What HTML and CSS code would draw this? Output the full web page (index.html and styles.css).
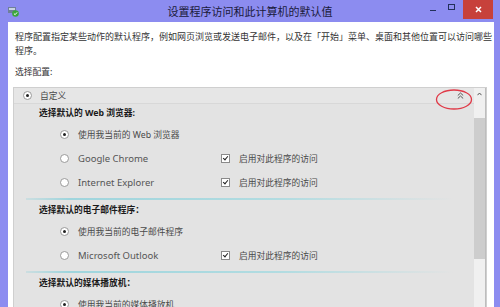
FILE: index.html
```html
<!DOCTYPE html>
<html lang="zh-CN">
<head>
<meta charset="utf-8">
<link rel="stylesheet" href="styles.css">
</head>
<body>
<div class="window">
  <div class="titlebar">
    <div class="app-icon">
      <svg width="11" height="10" viewBox="0 0 11 10">
        <rect x="0" y="0" width="8" height="6" fill="#6f7f9a"/>
        <rect x="1" y="1" width="6" height="2" fill="#c9d3e3"/>
        <circle cx="7.5" cy="6.5" r="3.3" fill="#3aa63a"/>
        <path d="M5.9 6.5 L7.1 7.7 L9.1 5.4" stroke="#fff" stroke-width="1" fill="none"/>
      </svg>
    </div>
    <div class="title">设置程序访问和此计算机的默认值</div>
    <div class="controls">
      <span class="btn-min"></span>
      <span class="btn-max"></span>
      <span class="btn-close">
        <svg width="7" height="7" viewBox="0 0 7 7"><path d="M1 1 L6 6 M6 1 L1 6" stroke="#fff" stroke-width="1.5"/></svg>
      </span>
    </div>
  </div>
  <div class="client">
    <p class="desc">程序配置指定某些动作的默认程序，例如网页浏览或发送电子邮件，以及在「开始」菜单、桌面和其他位置可以访问哪些<br>程序。</p>
    <div class="label">选择配置:</div>
    <div class="panel">
      <div class="list">
        <div class="header">
          <span class="radio on"></span>
          <span class="header-text">自定义</span>
          <svg class="chev" width="7" height="7" viewBox="0 0 7 7"><path d="M0.8 3.5 L3.5 1 L6.2 3.5 M0.8 6.5 L3.5 4 L6.2 6.5" stroke="#555" stroke-width="1" fill="none"/></svg>
        </div>
        <div class="section">
          <div class="heading">选择默认的 Web 浏览器:</div>
          <div class="option"><span class="radio on"></span><span class="opt-label">使用我当前的 Web 浏览器</span></div>
          <div class="option"><span class="radio"></span><span class="opt-label latin">Google Chrome</span><span class="check"></span><span class="chk-label">启用对此程序的访问</span></div>
          <div class="option"><span class="radio"></span><span class="opt-label latin">Internet Explorer</span><span class="check"></span><span class="chk-label">启用对此程序的访问</span></div>
        </div>
        <div class="sep"></div>
        <div class="section">
          <div class="heading">选择默认的电子邮件程序：</div>
          <div class="option"><span class="radio on"></span><span class="opt-label">使用我当前的电子邮件程序</span></div>
          <div class="option"><span class="radio"></span><span class="opt-label latin">Microsoft Outlook</span><span class="check"></span><span class="chk-label">启用对此程序的访问</span></div>
        </div>
        <div class="sep"></div>
        <div class="section">
          <div class="heading">选择默认的媒体播放机：</div>
          <div class="option"><span class="radio on"></span><span class="opt-label">使用我当前的媒体播放机</span></div>
        </div>
      </div>
      <div class="scrollbar">
        <div class="sb-arrow">
          <svg width="5" height="4" viewBox="0 0 5 4"><path d="M0.5 3.2 L2.5 1 L4.5 3.2" stroke="#555" stroke-width="1" fill="none"/></svg>
        </div>
        <div class="sb-gap"></div>
        <div class="sb-thumb"></div>
        <div class="sb-rest"></div>
      </div>
      <svg class="mark" width="40" height="24" viewBox="0 0 40 24"><ellipse cx="19" cy="11.5" rx="17.5" ry="9.5" fill="none" stroke="#e03a48" stroke-width="1.3"/></svg>
    </div>
  </div>
</div>
</body>
</html>
```

FILE: styles.css
```css
* { box-sizing: border-box; }
html, body { margin: 0; padding: 0; }
body {
  width: 500px;
  height: 307px;
  overflow: hidden;
  background: #8c8cf0;
  font-family: "Noto Sans", "Noto Sans CJK SC", sans-serif;
}
.window {
  display: flex;
  flex-direction: column;
  height: 307px;
}
.titlebar {
  height: 22px;
  display: flex;
  align-items: flex-start;
  position: relative;
}
.app-icon {
  margin: 7px 0 0 8px;
  width: 11px;
  height: 10px;
  display: flex;
}
.title {
  position: absolute;
  left: 0;
  right: 0;
  top: 4px;
  text-align: center;
  font-family: "Noto Sans CJK SC", sans-serif;
  font-size: 11px;
  line-height: 14px;
  color: #1a1a3a;
}
.controls {
  margin-left: auto;
  margin-right: 7px;
  display: flex;
  align-items: flex-start;
}
.btn-min {
  width: 6px;
  height: 1px;
  background: #22305a;
  margin: 10px 12px 0 0;
}
.btn-max {
  width: 7px;
  height: 6px;
  border: 1px solid #22305a;
  margin: 4px 8px 0 0;
}
.btn-close {
  width: 30px;
  height: 19px;
  background: #c7413b;
  display: flex;
  align-items: center;
  justify-content: center;
}
.client {
  flex: 1;
  background: #fff;
  margin: 0 6px 0 8px;
  padding: 8px 7px 0 5px;
  display: flex;
  flex-direction: column;
  min-height: 0;
}
.desc {
  margin: 0;
  padding-left: 2px;
  font-family: "Noto Sans CJK SC", sans-serif;
  font-size: 9px;
  line-height: 14px;
  color: #333;
  white-space: nowrap;
}
.label {
  margin-top: 7px;
  padding-left: 2px;
  font-family: "Noto Sans CJK SC", sans-serif;
  font-size: 8.75px;
  line-height: 14px;
  color: #333;
}
.panel {
  margin-top: 8px;
  flex: 1;
  display: flex;
  border: 1px solid #cfcfcf;
  border-bottom: none;
  position: relative;
  min-height: 0;
}
.list {
  flex: 1;
  background: #e3e3e3;
  font-size: 8.75px;
  color: #4a4a4a;
}
.header {
  height: 16px;
  display: flex;
  align-items: center;
  padding-left: 9px;
  padding-right: 3px;
  border-bottom: 1px solid #d8d8d8;
  background: #e6e6e6;
}
.header-text {
  margin-left: 8px;
  font-family: "Noto Sans CJK SC", sans-serif;
  color: #4a4a4a;
}
.chev {
  margin-left: auto;
  margin-right: 7px;
  margin-top: -1px;
}
.radio {
  width: 9px;
  height: 9px;
  border-radius: 50%;
  border: 1px solid #9a9a9a;
  background: #fff;
  flex: none;
  position: relative;
}
.radio.on::after {
  content: "";
  position: absolute;
  left: 2px;
  top: 2px;
  width: 3px;
  height: 3px;
  border-radius: 50%;
  background: #222;
}
.section {
  padding: 2px 0 4px;
}
.sep + .section { padding-top: 3px; }
.heading {
  height: 14px;
  line-height: 14px;
  margin-bottom: 2px;
  padding-left: 25px;
  font-weight: bold;
  color: #1a1a1a;
}
.option {
  height: 24px;
  display: flex;
  align-items: center;
  padding-left: 46px;
}
.opt-label {
  margin-left: 9px;
  width: 143px;
  flex: none;
  white-space: nowrap;
}
.latin {
  font-size: 9.5px;
  color: #555;
}
.check {
  width: 9px;
  height: 9px;
  border: 1px solid #8a8a8a;
  background: #fff;
  flex: none;
  position: relative;
}
.check::after {
  content: "";
  position: absolute;
  left: 2px;
  top: 0px;
  width: 2px;
  height: 4px;
  border: solid #222;
  border-width: 0 1.5px 1.5px 0;
  transform: rotate(40deg);
}
.chk-label {
  margin-left: 9px;
  white-space: nowrap;
}
.sep {
  height: 2px;
  margin-left: 12px;
  margin-right: 20px;
  background: linear-gradient(to right, rgba(150,210,218,0.3), #9fd5dd 10%, #b2dce1 60%, rgba(200,225,228,0));
}
.scrollbar {
  width: 12px;
  display: flex;
  flex-direction: column;
  border-right: 1px solid #bdbdbd;
  background: #f0f0f0;
}
.sb-arrow {
  height: 12px;
  display: flex;
  justify-content: center;
  align-items: center;
  background: #f0f0f0;
}
.sb-gap { height: 18px; }
.sb-thumb {
  height: 141px;
  background: #cdcdcd;
}
.sb-rest { flex: 1; }
.mark {
  position: absolute;
  left: 421px;
  top: 0px;
}
```
